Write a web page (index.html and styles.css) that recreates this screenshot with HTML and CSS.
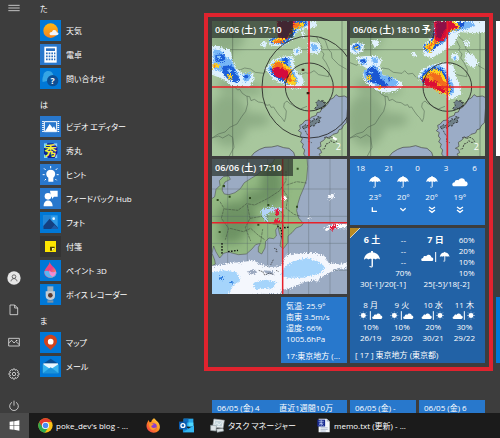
FILE: index.html
```html
<!DOCTYPE html>
<html lang="ja">
<head>
    <meta charset="UTF-8">
    <meta name="viewport" content="width=device-width, initial-scale=1.0">
    <title>スタート メニュー</title>
    <link rel="stylesheet" href="styles.css">
</head>
<body>
    <!-- shared symbols -->
    <svg class="defs" aria-hidden="true">
        <defs>
            <filter id="rough" x="-10%" y="-10%" width="120%" height="120%" color-interpolation-filters="sRGB">
                <feTurbulence type="fractalNoise" baseFrequency="0.3" numOctaves="2" seed="4" result="n"/>
                <feDisplacementMap in="SourceGraphic" in2="n" scale="16" xChannelSelector="R" yChannelSelector="G"/>
            </filter>
            <filter id="soft" x="-50%" y="-50%" width="200%" height="200%"><feGaussianBlur stdDeviation="14"/></filter>
            <linearGradient id="sun" x1="0" y1="0" x2="0" y2="1"><stop offset="0" stop-color="#fdb813"/><stop offset="1" stop-color="#f58220"/></linearGradient>
            <linearGradient id="fox" x1="1" y1="0" x2="0" y2="1"><stop offset="0" stop-color="#ffe24a"/><stop offset=".5" stop-color="#ff8a1f"/><stop offset="1" stop-color="#f0304f"/></linearGradient>
            <linearGradient id="drop" x1="0" y1="0" x2="1" y2="1"><stop offset="0" stop-color="#ff5a5a"/><stop offset=".5" stop-color="#e83e8c"/><stop offset="1" stop-color="#ffb347"/></linearGradient>
        </defs>
        <symbol id="umbrella" viewBox="0 0 36 36">
            <path d="M1 18C2 8 10 3 16 3V0h4v3c6 0 14 5 15 15-3-3-7-3-9 0-2-2-4-2-6-1v14c0 5-7 5-8 1h3c0 2 2 2 2 0V17c-2-1-5-1-7 1-2-3-6-3-8 0z" fill="#fff"/>
        </symbol>
        <symbol id="cloud" viewBox="0 0 48 28">
            <path d="M7 27C-2 27-1 15 8 15 8 8 15 6 19 9 24-1 39 1 39 12c10 0 11 15 1 15z" fill="#fff"/>
        </symbol>
        <symbol id="sunny" viewBox="0 0 30 30">
            <circle cx="15" cy="15" r="8.500" fill="#fff"/>
            <path d="M15 1v28M1 15h28M5 5l20 20M25 5L5 25" stroke="#fff" stroke-width="2" stroke-dasharray="3 2"/>
        </symbol>
        <symbol id="chevron2" viewBox="0 0 24 24">
            <path d="M3 3l9 6 9-6M3 12l9 7 9-7" fill="none" stroke="#fff" stroke-width="4"/>
        </symbol>
        <!-- Kanto plain, close view -->
        <symbol id="kanto" viewBox="36 33 405 405">
            <path fill="#a8c79d" d="M36 33h405v405H36z"/>
            <g filter="url(#soft)" fill="#7f9f78" opacity=".65">
                <ellipse cx="75" cy="70" rx="60" ry="60"/>
                <ellipse cx="85" cy="330" rx="60" ry="80"/>
                <ellipse cx="160" cy="330" rx="50" ry="22"/>
                <ellipse cx="150" cy="240" rx="40" ry="16"/>
                <ellipse cx="90" cy="225" rx="40" ry="20"/>
            </g>
            <path fill="#9bacc6" stroke="#444" stroke-width="2" d="M445 264l-12-6-16 2-9-6-8 10-9 4-8 14-12 12-6 2-4 10-10 2-2 8-16 6-6 8-12 2-8 10-8 4 2 10-6 6 9 6-3 10 6 8-5 10 8 6-3 10 7 8-3 12 8 10h44l-6-10 8-4-4-10-9-3 11-6-2-12 10-6 8-10 4 2 10-4 6-6 14-4 4-10 8-2 6-12 8-6z"/>
            <path fill="#9bacc6" stroke="#444" stroke-width="2" d="M153 440l10-12 16-10 16-6 20-1 18-4 18 6 16 2 14 12 4 13z"/>
            <path fill="#6f8088" stroke="#222" stroke-width="2.500" stroke-dasharray="6 4" d="M344 296l8-10-4-8 8-8 6 4 8-4-3 8 11-2-6 8 6 4-12 4-2 6-8-4-6 6zM306 352l10-8 6 4 8-10-3-8 10 4 4-8 8 4 4-10 10 2-6 8 4 6-14 4-4 8-10-1-4 8-10-3-6 6z"/>
            <path fill="none" stroke="#333" stroke-width="2.500" stroke-dasharray="6 3" d="M372 384l8-4 4 6 12-4 8 4 6 8-8 4-10-6-6 8-8 2-4 14-8 2M316 362l6 12 6 4-3 16 10 4"/>
            <g fill="none" stroke="#3f5043" stroke-width="1.800" opacity=".75">
                <path d="M98 33v405M426 33v405M36 119h405"/>
                <path d="M36 158l20 8 8-6 18 10 14 2 4 8 22-1 12-5 18 3 14 10 26 3 8-8 10 10 14-2 10 12 20 10M103 230l10 10 6-2 8 12 12 8 10 2 4 12 10-4 12 8 14 2 12 8 8-2 4 8 8-1 6 10 10 14 8 8 8 12 4-12 2-20-8-12 2-12 8-6 6 6 20 12 14 6 20-8M141 258l2 24-6 22-12 16-14 22-22 10-14 14-20 6-19 12M36 384l20-6 12 6 18-10 12 8 4 30-14 26M350 80l16 32-4 8 10 12-4 12 10 14 10 20-2 22-30-6-14-12-10 6-8 2-8-2-10 4-22-2M362 80l14 12 8 24 10 12 2 16 20 20 24 14"/>
            </g>
        </symbol>
    </svg>

    <main class="start">
        <nav class="rail" aria-label="スタート">
            <button class="rail-btn rail-menu" aria-label="メニュー"><svg viewBox="0 0 36 24"><path d="M1 4h34M1 12h34M1 20h34" stroke="#ddd" stroke-width="2.500"/></svg></button>
            <button class="rail-btn rail-user" aria-label="アカウント"><svg viewBox="0 0 42 42"><circle cx="21" cy="21" r="20" fill="#e6e6e6"/><circle cx="21" cy="17" r="5.500" fill="none" stroke="#555" stroke-width="2.500"/><path d="M12 31c1-11 17-11 18 0" fill="none" stroke="#555" stroke-width="2.500"/></svg></button>
            <button class="rail-btn" aria-label="ドキュメント"><svg viewBox="0 0 36 36"><path d="M6 3h14l9 9v20H6zM20 3v9h9" fill="none" stroke="#ddd" stroke-width="2.500"/></svg></button>
            <button class="rail-btn" aria-label="ピクチャ"><svg viewBox="0 0 36 36"><path d="M2 7h32v23H2zM2 21l9-8 7 8 5-5 11 10" fill="none" stroke="#ddd" stroke-width="2.500"/><path d="M24 12h4v3h-4z" fill="#ddd"/></svg></button>
            <button class="rail-btn" aria-label="設定"><svg viewBox="0 0 36 36"><path d="M15 3h6l1 4 4-2 5 5-3 4 5 1v6l-5 1 3 4-5 5-4-3-1 5h-6l-1-5-4 3-5-5 3-4-5-1v-6l5-1-3-4 5-5 4 2z" fill="none" stroke="#ddd" stroke-width="2.500"/><circle cx="18" cy="18" r="5" fill="none" stroke="#ddd" stroke-width="2.500"/></svg></button>
            <button class="rail-btn" aria-label="電源"><svg viewBox="0 0 36 36"><path d="M18 2v15M12 7a13 13 0 1 0 12 0" fill="none" stroke="#ddd" stroke-width="2.500"/></svg></button>
        </nav>

        <div class="apps">
            <section class="app-group">
                <h2>た</h2>
                <a class="app" href="#"><svg class="app-icon" viewBox="0 0 63 63"><circle cx="32" cy="32" r="22" fill="url(#sun)"/><path d="M35 46c-9 0-8-11 1-10 2-9 14-7 14 1 8 0 7 9 0 9z" fill="#f4f6fb"/></svg>天気</a>
                <a class="app" href="#"><svg class="app-icon alt" viewBox="0 0 63 63"><path d="M13 8h37v48H13z" fill="#fff"/><path d="M18 13h27v8H18z" fill="#2a6fc0"/><path d="M18 28h28M18 37h28M18 46h28" stroke="#2a6fc0" stroke-width="5" stroke-dasharray="5 3"/></svg>電卓</a>
                <a class="app" href="#"><svg class="app-icon" viewBox="0 0 63 63"><path d="M8 42c-2-8 0-14 2-18C10 4 38 4 40 22l-2 14-14 2z" fill="#35a5e5"/><circle cx="38" cy="38" r="17" fill="#0b4f96"/><text x="38" y="47" class="q">?</text></svg>問い合わせ</a>
            </section>
            <section class="app-group">
                <h2>は</h2>
                <a class="app" href="#"><svg class="app-icon alt" viewBox="0 0 63 63"><path d="M13 17h37v30H13z" fill="none" stroke="#fff" stroke-width="3"/><path d="M9 15v34M55 15v34" stroke="#fff" stroke-width="5" stroke-dasharray="3 3"/><path d="M15 46l14-22 9 12 4-5 8 15z" fill="#fff"/></svg>ビデオ エディター</a>
                <a class="app" href="#"><svg class="app-icon alt" viewBox="0 0 63 63"><path d="M12 10h40v44H12z" fill="#0a1f9c"/><path d="M12 10h10l-6 14h-4zM40 10h12v12zM12 54V42l12 12zM44 54l8-14v14z" fill="#7fd6ff"/><text x="32" y="46" class="shu">秀</text></svg>秀丸</a>
                <a class="app" href="#"><svg class="app-icon alt" viewBox="0 0 63 63"><path d="M32 17c16 0 17 17 8 24v12H25V41c-10-7-8-24 7-24z" fill="#fff"/><path d="M32 6v7M12 13l5 5M52 13l-5 5M8 32h6M50 32h6M14 49l4-4M50 49l-4-4" stroke="#fff" stroke-width="3"/></svg>ヒント</a>
                <a class="app" href="#"><svg class="app-icon alt" viewBox="0 0 63 63"><circle cx="24" cy="25" r="10" fill="#fff"/><path d="M11 55c-1-23 27-23 27 0zM30 8h23v18H42l-6 7v-7h-3z" fill="#fff"/></svg>フィードバック Hub</a>
                <a class="app" href="#"><svg class="app-icon" viewBox="0 0 63 63"><path d="M10 10h43v41H10z" fill="#2f9be8"/><path d="M10 10h23v20L10 46z" fill="#2285d6"/><path d="M10 42l19-22 24 26v5H10z" fill="#143f80"/><path d="M33 51l10-12 10 8v4z" fill="#1d5ba8"/><circle cx="41" cy="20" r="4" fill="#e8f6ff"/></svg>フォト</a>
                <a class="app" href="#"><svg class="app-icon dark" viewBox="0 0 63 63"><path d="M15 15h33v33H15z" fill="#fde500"/><path d="M30 32h14v4l-8 8h-6z" fill="#4a4100"/><path d="M36 44v-8h8z" fill="#fff6a0"/></svg>付箋</a>
                <a class="app" href="#"><svg class="app-icon" viewBox="0 0 63 63"><path d="M29 6c4 12 20 18 20 32 0 20-36 20-36 0C13 26 26 20 29 6z" fill="url(#drop)"/><path d="M13 34c12-6 14 6 36 2 2 22-36 24-36-2z" fill="#5db5f0"/><path d="M28 30c6 10 14 8 20 4 0 8-4 14-10 16-8-4-12-10-10-20z" fill="#f28ad0"/></svg>ペイント 3D</a>
                <a class="app" href="#"><svg class="app-icon" viewBox="0 0 63 63"><path d="M22 7h18v18H22z" fill="#9fb0bd"/><path d="M17 22h28v14c0 8-6 12-14 12s-14-4-14-12z" fill="#c3ccd4"/><circle cx="31" cy="34" r="7" fill="#5a3a30"/><path d="M22 49h18v7H22z" fill="#7f93a5"/></svg>ボイス レコーダー</a>
            </section>
            <section class="app-group">
                <h2>ま</h2>
                <a class="app" href="#"><svg class="app-icon" viewBox="0 0 63 63"><path d="M32 55C24 44 12 40 12 27c0-25 39-25 39 0 0 13-12 17-19 28z" fill="#d0431c"/><circle cx="32" cy="29" r="8.500" fill="#fff"/></svg>マップ</a>
                <a class="app" href="#"><svg class="app-icon" viewBox="0 0 63 63"><path d="M8 24L32 8l24 16v28H8z" fill="#0a4d92"/><path d="M10 22h44v28H10z" fill="#e9f7ff"/><path d="M8 24l24 16 24-16v28H8z" fill="#38b4ee"/><path d="M8 52l24-18 24 18z" fill="#1a93dc"/></svg>メール</a>
            </section>
        </div>

        <div class="tiles">
            <div class="tile-group framed">
                <a class="tile large" href="#">
                    <svg class="map" viewBox="36 33 405 405" preserveAspectRatio="xMidYMid slice">
                        <use href="#kanto" x="36" y="33" width="405" height="405"/>
                        <g filter="url(#rough)">
                            <path fill="#dcf0fd" d="M34 108l22 0 12 8 24 2 4 30 12 26 20 16 32 2 4 16-16 22-30-2-24 0-24-20-34-14-8-20zM196 176l24-26 24-10 36-2 2 30 10 20 16 12 4 20-12 14-26 2-24-14-32-16zM182 104l12-14 8 10-8 16zM206 88l30-6 4-50h90l4 16-40 14-22 30-26 18-38-4zM318 40l30-6 4 14-30 12zM324 94l34 4 6 22-12 12-26-4zM278 118l22-6 4 18-18 8zM304 66l8-2 2 22-8-2z"/>
                            <path fill="#76b6f7" d="M40 118l26 4 12 20 16 6 14 34 12 14-4 24-16-6-30-24-30-14zM202 178l20-24 26-10 26 0-4 18 12 24 12 24-4 14-28-4-44-24zM128 194l22-4 4 14-20 14zM332 100l20 6 4 14-20 2zM208 86l30-4 4-50h84l0 14-34 14-20 28-22 18-38-6zM284 122l12-4 2 8-10 4z"/>
                            <path fill="#1c5fd8" d="M46 136l22-4 10 14-14 10-18-2zM68 168l30-2 12 26 10 18-12 8-26-12-14-18zM254 144l12 2-4 16 12 22 14 26-6 14-30-6-36-24-4-16 18-20zM130 200l10-8 6 8-8 6zM210 88l28-6 6-50h76l-2 14-28 12-18 28-24 16-34-4z"/>
                            <path fill="#8ec8fb" d="M50 138l10-2 4 8-10 4zM84 176l8 0 2 10-8 0z"/>
                            <path fill="#ffd21f" d="M37 162l16-4 6 12-20 6zM80 192l14 0 4 12-12 4zM216 164l14-14 18 4 14 14 12 4 2 20 10 14 2 18-18 0-22-18-30-16zM214 92l26-10 8-44 66 0-4 12-28 8-16 26-22 12-28 0z"/>
                            <path fill="#f4731c" d="M38 164l8 0 0 6-8 0zM220 166l10-12 14 6 16 16 12 4 0 24 8 12-16 0-14-14-30-14zM220 92l26-6 4 10-28 6zM274 40h28l-6 12-24 4z"/>
                            <path fill="#d40b3c" d="M218 176l14-6 14 4 18 10 0 20-14 4-22-8-10-12zM230 34h54l-8 28-14 22-28 0z"/>
                            <path fill="#7d1048" d="M234 34h42l-2 26-14 24-20-2z"/>
                        </g>
                        <g fill="none" stroke="#222" stroke-width="2.500"><circle cx="328" cy="231" r="72"/><ellipse cx="328" cy="231" rx="142" ry="153"/></g>
                        <path d="M327 33v405M36 231h405" stroke="#e8202a" stroke-width="5"/>
                        <path d="M305 176h8v7h-8zM320 246h8v7h-8z" fill="#3a1c10"/>
                        <path d="M398 378l14 8-4 6-10-6z" fill="#fff"/>
                    </svg>
                    <span class="stamp">06/06 (土) 17:10</span>
                    <span class="corner">2</span>
                </a>
                <a class="tile large" href="#">
                    <svg class="map" viewBox="36 33 405 405" preserveAspectRatio="xMidYMid slice">
                        <use href="#kanto" x="36" y="33" width="405" height="405"/>
                        <g filter="url(#rough)">
                            <path fill="#e2f2fd" d="M34 108l22-12 22 6-2 20-22 12-20-6zM54 142l28-4 30 0 20 8-6 24 8 24 26 8 32 14 0 16-26 14-34 2-28-14-24-20-6-26 14-12-24-14zM100 92l18-4 6 14-14 12zM238 202l16-26 36-14 30-4 26 8 6 30 16 36 2 20-22 12-44-22-44-18zM254 106l20-14 10-60h162l-2 34-34 4-46-4-14 36-32 20-36 22-24-6zM338 134l20-6 6 18-18 8zM382 124l26 12 14 26-16 12-24-16zM378 92l16 0 0 16-14 0zM220 130l12-4 4 10-8 4zM318 240l36 6 4 14-26 10z"/>
                            <path fill="#74b4f6" d="M40 112l16-12 16 6-4 14-20 6zM62 148l24-4 4 14-16 8zM100 142l18 2 2 14-14 4zM76 184l30-20 16 10 12 22 24 4 26 18-14 12-34 4-24-8-32-20zM244 202l16-24 30-12 26 4 14 26 18 34 0 22-22 2-38-18-34-16zM256 108l22-16 14-56h112l8 12-30 10-44 8-16 30-30 16-24 18zM344 144l8-6 4 8-8 6z"/>
                            <path fill="#1a56d2" d="M44 110l14-6 8 8-14 8zM82 188l16-18 12 2 12 16 4 16 12 8 12 16-12 6-24-14-22-4zM66 150l14-2 4 10-10 2zM150 204l10-2 2 8-10 2zM248 202l16-20 26-12 22 6 14 24 16 34-6 18-18-4-36-18-28-14zM256 108l26-18 14-54h84l-4 16-38 14-16 24-22 18-20 18-20-6z"/>
                            <path fill="#8ec8fb" d="M94 186l6-4 4 8-8 2zM110 226l6-2 2 8-8 0z"/>
                            <path fill="#ffd21f" d="M50 110h8v6h-8zM84 200l14-4 4 12-14 0zM118 228l12-2 4 10-12 2zM252 202l16-14 24-14 18 12 14 20 14 30-6 20-28-8-36-26zM258 110l28-20 16-54h56l10 18-34 12-18 26-26 14-14 22z"/>
                            <path fill="#f26a1c" d="M256 206l14-14 16-6 20 8 12 18 14 22-6 14-20-6-26-20-22-4zM264 112l24-16 16-52h44l6 12-26 10-16 24-28 14-10 12z"/>
                            <path fill="#da0e36" d="M254 208l14-4 14 10 20 0 14 22 10 8-12 6-26-14-28-12zM288 34h52l22 18-26 8-14 24-18 14-14-10z"/>
                            <path fill="#f59a1e" d="M268 200l10-4 8 14-10 4zM294 216l12 2 4 10-10 0z"/>
                            <path fill="#8d1048" d="M294 34h36l0 18-14 16-8 18-12-4z"/>
                        </g>
                        <circle cx="328" cy="231" r="73" fill="none" stroke="#222" stroke-width="2.500"/>
                        <path d="M328 33v405M36 231h405" stroke="#e8202a" stroke-width="5"/>
                    </svg>
                    <span class="stamp">06/06 (土) 18:10 予</span>
                    <span class="corner">2</span>
                </a>
                <a class="tile large" href="#">
                    <svg class="map" viewBox="36 12 405 405" preserveAspectRatio="xMidYMid slice">
                        <path fill="#9babc3" d="M36 12h405v405H36z"/>
                        <path fill="#93b983" stroke="#444" stroke-width="1.500" d="M30 150v-15l14-10 4-22 12-12-2-14 12-12 16-2 5 10-16 8-8 16 0 10 6 10 14 2 18-6 16-12 12-18 22-14 20-12 22-24 20-8 10-20h94l2 30-3 38-8 24-12 28-6 20-4 22 6 22 14 16-6 8-16 6-12 14-12 10 0 20-14 18-10-8 4-24-6-14-4-20-7 10 2 18-8 8-14-2-10 10-2 20-10 18-10-6 0-14 6-12-14 4-12 14-16 14-24 2-30-8-14 4-12 14-12-20-6-16-5 22 8 20 2 12-14 8-20 6z"/>
                        <g filter="url(#soft)" fill="#55794f" opacity=".6">
                            <ellipse cx="110" cy="190" rx="60" ry="50"/>
                            <ellipse cx="215" cy="90" rx="34" ry="60"/>
                            <ellipse cx="90" cy="245" rx="40" ry="20"/>
                            <ellipse cx="165" cy="130" rx="34" ry="24"/>
                        </g>
                        <path fill="none" stroke="#3a4738" stroke-width="1.500" stroke-dasharray="9 2" d="M60 140l12 20-8 30 22 30-10 34M74 162l40 4 26-20 24 4 40-20 34-22 20-30 0-30M142 150l8 40-14 28 16 40M150 190l36-6 16 20 40 6M90 220l40 10 22-10 22 20 20 14M244 96l20 30-6 34 24 18 20 6M260 90l30-10 30 4M182 262l6-40M236 160l16 22-8 20 12 20"/>
                        <path fill="none" stroke="#56646a" stroke-width="1.500" opacity=".7" d="M83 12v405M142 12v405M203 12v405M265 12v405M326 12v405M390 12v405M36 102h405M36 184h405M36 265h405M36 346h405"/>
                        <g filter="url(#rough)">
                            <path fill="#f4f7fd" d="M30 332l24 0 30-8 40-2 36-6 24 14 30 6 32-2 6-24 12-12 54-4 34 0 22 10 12 20 26 4 28-4v14l-36 6-28 16-24 14-40 8-32 14-30 8-12 14-50-2-60 8H30zM382 124l18-8 4 12-18 6zM344 378l12-6 0 8z"/>
                            <path fill="#a5d4fb" d="M30 354l36-8 44 6 12 24-24 16-14 30H30zM250 340l26-20 44-10 32 8 24 18-16 20-48 12-50 0-20-10zM158 384l40-10 34 8-14 18-52 2z"/>
                            <path fill="#9ba8bf" d="M140 350l20-8 12 10-14 8zM190 346l28 2 6 10-24 0z"/>
                            <path fill="#b3d3f8" d="M180 164l36-8 32 4 0 8-34 2-20 12 14 20-14-6-10-20z"/>
                            <path fill="#2e7de0" d="M58 366l12 0-2 10-10-2zM88 378l10 0v8l-10-2zM412 206l26 0v12l-22 2z"/>
                            <path fill="#fff" d="M372 222l32-16 36 0v14l-30 0-32 8zM246 120l14 6-4 12-12-4zM325 184l8 4-6 6z"/>
                            <path fill="#e01c3c" d="M388 220l16-12 8 6-16 14zM226 164l10-2 2 16-10 4zM222 194l14-2 2 10-14 4zM246 124l6 2-2 8z"/>
                        </g>
                        <path fill="none" stroke="#111" stroke-width="4" stroke-dasharray="5 4" d="M232 212l12 10 2 30M66 264v36M84 290l30-4M252 218l18-2"/>
                        <path fill="none" stroke="#333" stroke-width="2" stroke-dasharray="5 2" d="M222 280l8 2-2 8 6 0M220 314l-8 16M176 346l12 4 6 10 14-6 12 4M228 346l8 4"/>
                        <path fill="#2f4a20" d="M290 38h6v6h-6zM86 122h6v6h-6zM147 126h6v6h-6zM202 147h6v6h-6zM288 152h6v6h-6zM172 206h6v6h-6zM56 228h6v6h-6zM68 90h7v7h-7zM50 132h6v6h-6z"/>
                        <path d="M248 12v405M36 203h405" stroke="#e8202a" stroke-width="4.500"/>
                    </svg>
                    <span class="stamp">06/06 (土) 17:10</span>
                </a>
                <a class="tile wide hourly" href="#">
                    <span class="hours"><span>18</span><span>21</span><span>0</span><span>3</span><span>6</span></span>
                    <span class="slots">
                        <span class="slot"><svg class="wx"><use href="#umbrella"/></svg>23°<svg class="wind" viewBox="0 0 24 24"><path d="M4 4v12h14" fill="none" stroke="#fff" stroke-width="4"/></svg></span>
                        <span class="slot"><svg class="wx"><use href="#umbrella"/></svg>20°<svg class="wind" viewBox="0 0 24 24"><path d="M4 7l8 7 8-7" fill="none" stroke="#fff" stroke-width="4"/></svg></span>
                        <span class="slot"><svg class="wx"><use href="#umbrella"/></svg>20°<svg class="wind"><use href="#chevron2"/></svg></span>
                        <span class="slot"><svg class="wx cloudy"><use href="#cloud"/></svg>19°<svg class="wind"><use href="#chevron2"/></svg></span>
                    </span>
                </a>
                <a class="tile large forecast" href="#">
                    <span class="days">
                        <span class="day">
                            <span class="day-head"><b>6 土</b><svg class="wx-big"><use href="#umbrella"/></svg></span>
                            <span class="rain"><i>--</i><i>--</i><i>--</i><span>70%</span></span>
                            <span class="temps">30[-1]/20[-1]</span>
                        </span>
                        <span class="day">
                            <span class="day-head"><b>7 日</b><svg class="wx-pair" viewBox="0 0 90 36"><use href="#cloud" x="0" y="9" width="38" height="22"/><path d="M44 3v30" stroke="#fff" stroke-width="3"/><use href="#umbrella" x="54" y="2" width="34" height="31"/></svg></span>
                            <span class="rain"><span>60%</span><span>20%</span><span>10%</span><span>10%</span></span>
                            <span class="temps">25[-5]/18[-2]</span>
                        </span>
                    </span>
                    <span class="week">
                        <span class="week-day"><span>8 月</span><svg class="wx-row" viewBox="0 0 72 26"><use href="#sunny" x="0" y="0" width="26" height="26"/><path d="M34 0v26" stroke="#fff" stroke-width="3"/><use href="#cloud" x="39" y="5" width="32" height="19"/></svg><span>10%</span><span>26/19</span></span>
                        <span class="week-day"><span>9 火</span><svg class="wx-row" viewBox="0 0 72 26"><use href="#sunny" x="0" y="0" width="26" height="26"/><path d="M34 0v26" stroke="#fff" stroke-width="3"/><use href="#cloud" x="39" y="5" width="32" height="19"/></svg><span>10%</span><span>29/20</span></span>
                        <span class="week-day"><span>10 水</span><svg class="wx-row" viewBox="0 0 72 26"><use href="#cloud" x="1" y="5" width="32" height="19"/><path d="M37 0v26" stroke="#fff" stroke-width="3"/><use href="#sunny" x="44" y="0" width="26" height="26"/></svg><span>20%</span><span>30/21</span></span>
                        <span class="week-day"><span>11 木</span><svg class="wx-row" viewBox="0 0 72 26"><use href="#cloud" x="1" y="5" width="32" height="19"/><path d="M37 0v26" stroke="#fff" stroke-width="3"/><use href="#sunny" x="44" y="0" width="26" height="26"/></svg><span>30%</span><span>29/22</span></span>
                    </span>
                    <span class="place">[ 17 ] 東京地方 (東京都)</span>
                </a>
                <a class="tile now" href="#">
                    <span>気温: 25.9°</span>
                    <span>南東 3.5m/s</span>
                    <span>湿度: 66%</span>
                    <span>1005.6hPa</span>
                    <span class="now-place">17:東京地方 (...</span>
                </a>
            </div>
            <div class="tile-group next">
                <div class="tile blank"></div>
                <div class="tile edge"></div>
            </div>
            <div class="tile-group below">
                <a class="tile wide strip" href="#"><span>06/05 (金) 4</span><span>直近1週間10万</span></a>
                <a class="tile strip" href="#"><span>06/05 (金) -</span></a>
                <a class="tile strip" href="#"><span>06/05 (金) 6</span></a>
            </div>
        </div>
    </main>

    <footer class="taskbar">
        <button class="start-btn" aria-label="スタート"><svg viewBox="0 0 36 36"><path d="M2 6l13-2v13H2zM17 4l17-3v16H17zM2 19h13v13L2 30zM17 19h17v16l-17-3z" fill="#fff"/></svg></button>
        <button class="task task-chrome"><svg viewBox="0 0 46 46"><circle cx="23" cy="23" r="22" fill="#fbc116"/><path d="M23 23L4 12a22 22 0 0 0 17 33l11-17z" fill="#2da94f"/><path d="M4 12a22 22 0 0 1 38 0H23L14 28z" fill="#e33b2e"/><circle cx="23" cy="23" r="11" fill="#fff"/><circle cx="23" cy="23" r="8.500" fill="#4a8af4"/></svg><span>poke_dev's blog - ...</span></button>
        <button class="task task-icon" aria-label="Firefox"><svg viewBox="0 0 46 46"><path d="M25 1c5 4 6 7 9 9 14 12 11 35-10 35C5 45-3 27 4 14l4-8 3 7 5-1C17 7 21 3 25 1z" fill="url(#fox)"/><circle cx="23" cy="26" r="10" fill="#8a3fd0"/><path d="M10 17c8-3 12 1 14 4-4 0-6 2-8 5 4 6 11 7 17 1-2 10-14 13-20 5-3-5-4-10-3-15z" fill="#ff9a2a"/></svg></button>
        <button class="task task-icon" aria-label="Outlook"><svg viewBox="0 0 46 46"><path d="M14 2h30v24H14z" fill="#28a8ea"/><path d="M14 2h15v12H14z" fill="#0f6cbd"/><path d="M29 14h15v12H29z" fill="#50d9ff"/><path d="M12 22l17 10 17-10v22H12z" fill="#1490df"/><path d="M12 44l34-20v20z" fill="#35b8f1"/><path d="M0 11h24v24H0z" fill="#0a5aad"/><circle cx="12" cy="23" r="6" fill="none" stroke="#fff" stroke-width="4"/></svg></button>
        <button class="task task-manager"><svg viewBox="0 0 46 46"><path d="M12 3l32 4-4 24-32-3z" fill="#eef1f3" stroke="#9aa4aa" stroke-width="2"/><path d="M16 8l23 3-3 15-23-2z" fill="#c3d3da"/><path d="M16 20l6-6 5 8 9-8" fill="none" stroke="#fff" stroke-width="2"/><path d="M2 22l18 2-2 16-16-2zM20 34l20-2 2 8-20 4z" fill="#dfe4e7" stroke="#8f9a9f" stroke-width="2"/></svg><span>タスク マネージャー</span></button>
        <button class="task task-memo"><svg viewBox="0 0 46 46"><path d="M8 2h25l9 9v33H8z" fill="#f2f5fa"/><path d="M33 2v9h9z" fill="#a9b4c6"/><path d="M14 30h22M14 35h22M14 40h16" stroke="#8fa0bd" stroke-width="2"/><path d="M4 5h24v21H4z" fill="#16288f"/><path d="M8 10h16M16 6v19M9 16h14M9 23l6-7 8 7" stroke="#cfe0ff" stroke-width="2" fill="none"/></svg><span>memo.txt (更新) - ...</span></button>
    </footer>
</body>
</html>
```
FILE: styles.css
```css
* {
    margin: 0;
    padding: 0;
    box-sizing: border-box;
}

body {
    height: 100vh;
    display: flex;
    flex-direction: column;
    overflow: hidden;
    background: #3d3d3d;
    color: #fff;
    font-family: "Open Sans", "Noto Sans CJK JP", sans-serif;
    font-size: 8px;
    font-feature-settings: "palt";
}

a {
    color: inherit;
    text-decoration: none;
}

button {
    background: none;
    border: none;
    color: inherit;
    font: inherit;
    font-feature-settings: inherit;
    cursor: pointer;
}

svg {
    display: block;
}

.defs {
    position: absolute;
    width: 0;
    height: 0;
}

.start {
    flex: 1;
    min-height: 0;
    display: grid;
    grid-template-columns: 28px 176px minmax(0, 1fr);
    overflow: hidden;
}

/* left rail */
.rail {
    display: flex;
    flex-direction: column;
}

.rail-btn {
    height: 32px;
    display: flex;
    align-items: center;
    justify-content: center;
}

.rail-btn svg {
    width: 12px;
    height: 12px;
}

.rail-menu {
    height: 15px;
}

.rail-menu svg {
    height: 8px;
}

.rail-user {
    margin-top: auto;
}

.rail-user svg {
    width: 14px;
    height: 14px;
}

/* app list */
.apps {
    display: flex;
    flex-direction: column;
    gap: 6px;
    padding-left: 12px;
}

.app-group h2 {
    font-size: 8px;
    font-weight: 400;
    line-height: 18px;
}

.app {
    height: 24px;
    display: flex;
    align-items: center;
    gap: 5px;
}

.app-icon {
    width: 21px;
    height: 21px;
    background: #0078d7;
}

.app-icon.alt {
    background: #2877cc;
}

.app-icon.dark {
    background: #343434;
}

.q {
    font-size: 26px;
    font-weight: 700;
    fill: #fff;
    text-anchor: middle;
}

.shu {
    font-size: 38px;
    font-weight: 700;
    fill: #f4ee3a;
    text-anchor: middle;
}

/* tiles */
.tiles {
    display: grid;
    grid-template-columns: minmax(0, 1fr) 4px;
    column-gap: 3px;
    row-gap: 21px;
    align-content: start;
    padding-top: 13px;
}

.tile-group {
    display: grid;
    grid-template-columns: repeat(4, minmax(0, 1fr));
    grid-auto-rows: 66px;
    gap: 3px;
    padding: 8px;
}

.framed {
    padding: 4px;
    border: 4px solid #e0232e;
}

.next {
    grid-template-columns: 1fr;
    padding: 8px 0;
}

.below {
    height: 30px;
}

.tile {
    position: relative;
    overflow: hidden;
    background: #2878cc;
}

.large {
    grid-column: span 2;
    grid-row: span 2;
}

.wide {
    grid-column: span 2;
}

.blank {
    grid-row: span 2;
    background: #fff;
}

.edge {
    grid-row: 5;
    background: #0078d7;
}

.map {
    width: 100%;
    height: 100%;
}

.stamp {
    position: absolute;
    top: 0;
    left: 0;
    min-width: 81px;
    padding: 0 3px;
    background: rgba(40, 48, 42, 0.7);
    font-size: 9px;
    font-weight: 600;
    line-height: 17px;
    white-space: nowrap;
}

.corner {
    position: absolute;
    right: 6px;
    bottom: 2px;
    font-size: 9px;
    line-height: 14px;
}

.hourly {
    padding: 4px 5px;
    line-height: 10px;
}

.hours {
    display: flex;
    justify-content: space-between;
}

.hours span {
    width: 11px;
    text-align: center;
}

.slots {
    display: grid;
    grid-template-columns: repeat(4, 1fr);
    padding: 3px 6px 0;
}

.slot {
    display: flex;
    flex-direction: column;
    align-items: center;
    gap: 4px;
}

.wx {
    width: 12px;
    height: 12px;
}

.wx.cloudy {
    width: 16px;
}

.wind {
    width: 8px;
    height: 8px;
}

.forecast {
    display: flex;
    flex-direction: column;
    padding: 6px 5px;
    background: #2262a6;
    line-height: 11px;
}

.forecast::before {
    content: "";
    position: absolute;
    top: 0;
    left: 0;
    width: 11px;
    height: 11px;
    background: linear-gradient(135deg, #b98a22 0 42%, #d8d2c0 42% 50%, transparent 50%);
}

.days {
    display: grid;
    grid-template-columns: 1fr 1fr;
    column-gap: 2px;
}

.day {
    display: grid;
    grid-template-columns: 34px 22px;
}

.day-head {
    display: flex;
    flex-direction: column;
    align-items: center;
    gap: 6px;
}

.day-head b {
    font-size: 9px;
    font-weight: 700;
}

.wx-big {
    width: 18px;
    height: 17px;
}

.wx-pair {
    width: 30px;
    height: 12px;
}

.rain {
    display: flex;
    flex-direction: column;
    text-align: right;
}

.rain i {
    padding-right: 5px;
    font-style: normal;
}

.temps {
    grid-column: span 2;
    text-align: center;
}

.week {
    display: grid;
    grid-template-columns: repeat(4, 1fr);
    margin-top: 10px;
}

.week-day {
    display: flex;
    flex-direction: column;
    align-items: center;
}

.wx-row {
    width: 24px;
    height: 11px;
}

.place {
    margin-top: 6px;
}

.now {
    grid-column: 2;
    display: flex;
    flex-direction: column;
    padding: 3px 5px;
    line-height: 11px;
}

.now-place {
    margin-top: 6px;
    white-space: nowrap;
}

.strip {
    display: flex;
    justify-content: space-between;
    padding: 2px 14px 2px 5px;
    line-height: 12px;
    white-space: nowrap;
}

/* taskbar */
.taskbar {
    height: 25px;
    display: flex;
    align-items: stretch;
    background: #1b1b1b;
}

.start-btn {
    width: 29px;
    display: flex;
    align-items: center;
    justify-content: center;
    background: #4b4b4b;
}

.start-btn svg {
    width: 11px;
    height: 11px;
}

.task {
    display: flex;
    align-items: center;
    gap: 3px;
    white-space: nowrap;
}

.task svg {
    width: 15px;
    height: 15px;
    flex: none;
}

.task-chrome {
    width: 108px;
    padding-left: 9px;
}

.task-icon {
    width: 33px;
    justify-content: center;
}

.task-manager {
    width: 107px;
    padding-left: 7px;
}

.task-memo {
    padding-left: 6px;
}
```
